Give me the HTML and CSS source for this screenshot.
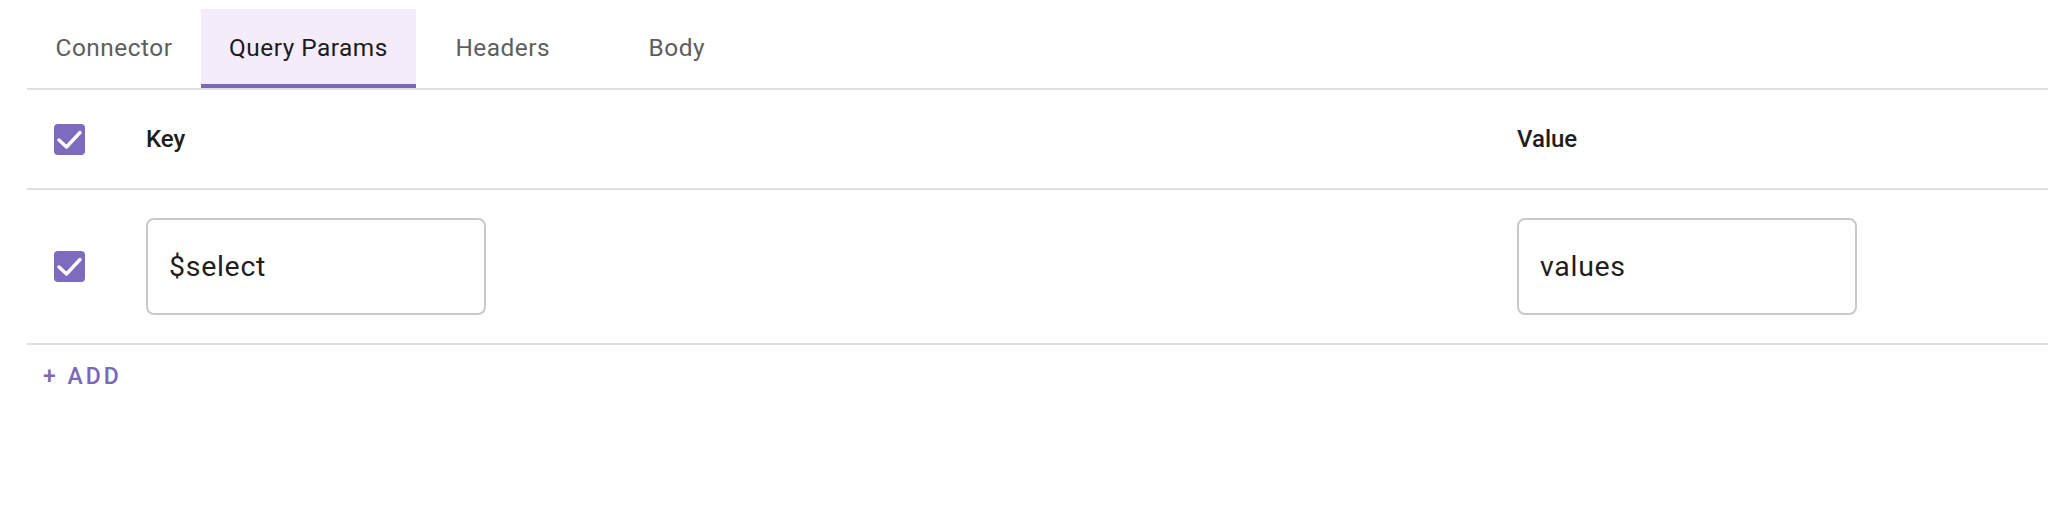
FILE: index.html
```html
<!DOCTYPE html>
<html lang="en">
<head>
<meta charset="utf-8">
<title>Query Params</title>
<link rel="stylesheet" href="styles.css">
</head>
<body>
<div class="panel">
  <div class="tabs">
    <div class="tab">Connector</div>
    <div class="tab active">Query Params</div>
    <div class="tab">Headers</div>
    <div class="tab">Body</div>
  </div>
  <div class="table">
    <div class="row head">
      <div class="cell check-cell">
        <span class="checkbox"><svg viewBox="0 0 31 31" width="31" height="31"><path d="M5 16 L12.5 23 L26 8.5" fill="none" stroke="#fff" stroke-width="3.4" stroke-linecap="round" stroke-linejoin="round"/></svg></span>
      </div>
      <div class="cell th">Key</div>
      <div class="cell th">Value</div>
    </div>
    <div class="row body">
      <div class="cell check-cell">
        <span class="checkbox"><svg viewBox="0 0 31 31" width="31" height="31"><path d="M5 16 L12.5 23 L26 8.5" fill="none" stroke="#fff" stroke-width="3.4" stroke-linecap="round" stroke-linejoin="round"/></svg></span>
      </div>
      <div class="cell"><div class="input">$select</div></div>
      <div class="cell"><div class="input">values</div></div>
    </div>
  </div>
  <div class="add">+ ADD</div>
</div>
</body>
</html>
```
FILE: styles.css
```css
html, body {
  margin: 0;
  padding: 0;
  background: #ffffff;
}
body {
  font-family: Roboto, "Liberation Sans", sans-serif;
  color: #1f1f1f;
  width: 2048px;
  height: 509px;
  overflow: hidden;
}
.panel {
  margin-left: 27px;
  padding-top: 9px;
}
.tabs {
  display: flex;
  border-bottom: 2px solid #e0e0e0;
}
.tab {
  box-sizing: border-box;
  height: 79px;
  min-width: 174px;
  padding: 2px 28px 0;
  display: flex;
  align-items: center;
  justify-content: center;
  font-size: 24.4px;
  letter-spacing: 0.5px;
  color: #5e5e5e;
  border-bottom: 4px solid transparent;
}
.tab.active {
  background: #f4ecfb;
  color: #1d1b20;
  border-bottom-color: #7b68bb;
}
.table {
  width: 2021px;
}
.row {
  display: grid;
  grid-template-columns: 119px 1371px 1fr;
  align-items: center;
  border-bottom: 2px solid #e0e0e0;
}
.row.head {
  height: 98px;
}
.row.body {
  height: 153px;
}
.check-cell {
  padding-left: 27px;
  display: flex;
  align-items: center;
}
.checkbox {
  width: 31px;
  height: 31px;
  border-radius: 4px;
  background: #7d6bbf;
  display: block;
}
.checkbox svg {
  display: block;
}
.th {
  font-size: 24px;
  font-weight: 500;
  color: #1e1e1e;
}
.input {
  box-sizing: border-box;
  width: 340px;
  height: 97px;
  border: 2px solid #c9c9c9;
  border-radius: 8px;
  padding-left: 21px;
  display: flex;
  align-items: center;
  font-size: 28.5px;
  letter-spacing: 0.7px;
  color: #1e1e1e;
}
.add {
  margin-top: 14px;
  margin-left: 16px;
  line-height: 36px;
  font-size: 23px;
  font-weight: 500;
  letter-spacing: 3px;
  color: #7b68b8;
}
```
